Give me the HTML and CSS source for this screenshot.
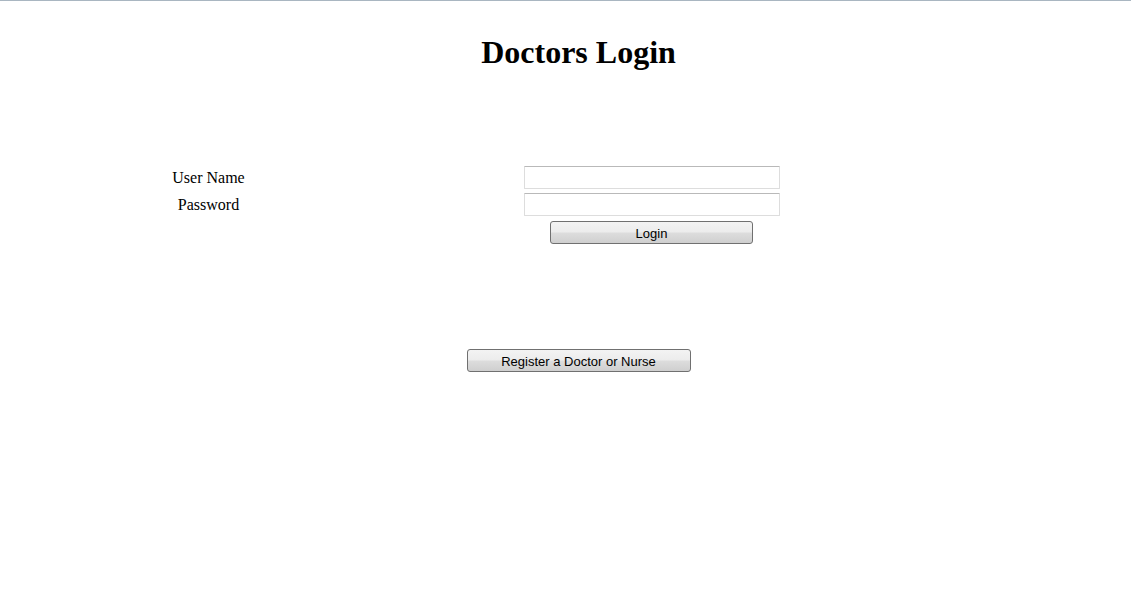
FILE: index.html
```html
<!DOCTYPE html>
<html lang="en">
<head>
<meta charset="utf-8">
<title>Doctors Login</title>
<link rel="stylesheet" href="styles.css">
</head>
<body>
<div class="page">
  <h1 class="title">Doctors Login</h1>
  <form class="login-form">
    <label class="label" for="user">User Name</label>
    <input class="field" id="user" type="text">
    <label class="label" for="pass">Password</label>
    <input class="field" id="pass" type="password">
    <span></span>
    <button class="btn btn-login" type="button">Login</button>
  </form>
  <div class="register">
    <button class="btn btn-register" type="button">Register a Doctor or Nurse</button>
  </div>
</div>
</body>
</html>
```

FILE: styles.css
```css
html, body {
  margin: 0;
  padding: 0;
  background: #ffffff;
}
body {
  border-top: 1px solid #a9b6c1;
  font-family: "Liberation Serif", "Times New Roman", serif;
  color: #000;
}
.page {
  padding-left: 26px;
}
.title {
  margin: 33px 0 0;
  font-size: 32px;
  font-weight: bold;
  text-align: center;
  line-height: 37px;
}
.login-form {
  margin-top: 95px;
  display: grid;
  grid-template-columns: 365px 522px;
  row-gap: 4px;
  align-items: center;
}
.label {
  justify-self: center;
  font-size: 16px;
  line-height: 18px;
  padding-top: 1px;
}
.field {
  justify-self: center;
  box-sizing: border-box;
  width: 256px;
  height: 23px;
  margin: 0;
  border: 1px solid #dddddd;
  border-top-color: #b9b9b9;
  border-radius: 1px;
  background: #fff;
  padding: 2px 3px;
}
.btn {
  box-sizing: border-box;
  height: 23px;
  margin: 0;
  padding: 2px 0 0;
  border: 1px solid #707070;
  border-radius: 3px;
  background: linear-gradient(to bottom, #f3f3f3 0%, #ececec 48%, #dddddd 52%, #cfcfcf 100%);
  font-family: "Liberation Sans", Arial, sans-serif;
  font-size: 13px;
  color: #000;
  line-height: 18px;
}
.btn-login {
  justify-self: center;
  width: 203px;
  margin-top: 1px;
  margin-right: 1px;
}
.register {
  margin-top: 105px;
  display: flex;
  justify-content: center;
}
.btn-register {
  width: 224px;
}
```
